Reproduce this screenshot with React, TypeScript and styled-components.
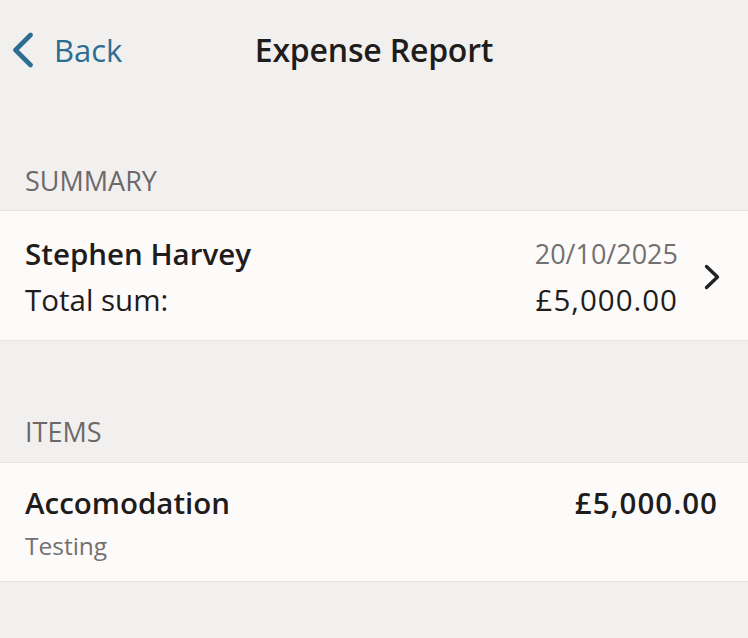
import React from "react";
import styled, { createGlobalStyle } from "styled-components";

const Global = createGlobalStyle`
  html, body { margin: 0; padding: 0; background: #f2f0ef; }
  body { font-family: "Open Sans", "Noto Sans", sans-serif; color: #1f1c1c; }
`;

const Page = styled.div`
  min-height: 638px;
  background: #f2f0ef;
`;

const Header = styled.header`
  height: 100px;
  display: grid;
  grid-template-columns: 1fr auto 1fr;
  align-items: center;
`;

const BackButton = styled.button`
  display: flex;
  align-items: center;
  gap: 20px;
  padding: 0 0 0 12px;
  border: none;
  background: none;
  color: #2e6d92;
  font-family: inherit;
  font-size: 31px;
  line-height: 40px;
  justify-self: start;
  cursor: pointer;
`;

const Title = styled.h1`
  margin: 0;
  font-size: 32px;
  font-weight: 600;
  line-height: 40px;
  color: #1f1c1c;
  letter-spacing: -0.2px;
`;

const SectionLabel = styled.div<{ $top: number; $bottom: number }>`
  padding: ${(p) => p.$top}px 25px ${(p) => p.$bottom}px;
  font-size: 27px;
  line-height: 30px;
  color: #6d6969;
  text-transform: uppercase;
`;

const Card = styled.div<{ $pt: number; $pb: number; $pr: number }>`
  background: #fdfafa;
  border-top: 1px solid #e6e3e2;
  border-bottom: 1px solid #e6e3e2;
  padding: ${(p) => p.$pt}px ${(p) => p.$pr}px ${(p) => p.$pb}px 25px;
  display: flex;
  align-items: center;
  gap: 26px;
`;

const CardBody = styled.div`
  flex: 1;
  display: flex;
  flex-direction: column;
  gap: 10px;
`;

const Line = styled.div`
  display: flex;
  justify-content: space-between;
  align-items: center;
`;

const Text = styled.span<{ $weight?: number; $size?: number; $color?: string; $lh?: number; $ls?: number }>`
  font-size: ${(p) => p.$size ?? 29.5}px;
  font-weight: ${(p) => p.$weight ?? 400};
  line-height: ${(p) => p.$lh ?? 36}px;
  letter-spacing: ${(p) => p.$ls ?? 0}px;
  color: ${(p) => p.$color ?? "#1f1c1c"};
`;

const Chevron = () => (
  <svg width="16" height="26" viewBox="0 0 16 26" fill="none">
    <polyline points="2.5,2.5 13.5,13 2.5,23.5" stroke="#222" strokeWidth="3.4" strokeLinecap="round" strokeLinejoin="round" />
  </svg>
);

const BackChevron = () => (
  <svg width="22" height="36" viewBox="0 0 22 36" fill="none">
    <polyline points="18.5,3 3.5,18 18.5,33" stroke="#2e6d92" strokeWidth="4.6" strokeLinecap="round" strokeLinejoin="round" />
  </svg>
);

export default function App() {
  return (
    <Page>
      <Global />
      <Header>
        <BackButton>
          <BackChevron />
          Back
        </BackButton>
        <Title>Expense Report</Title>
        <div />
      </Header>

      <SectionLabel $top={66} $bottom={14}>Summary</SectionLabel>
      <Card $pt={25} $pb={22} $pr={28}>
        <CardBody>
          <Line>
            <Text $weight={600}>Stephen Harvey</Text>
            <Text $size={27} $color="#737070">20/10/2025</Text>
          </Line>
          <Line>
            <Text>Total sum:</Text>
            <Text $ls={1}>£5,000.00</Text>
          </Line>
        </CardBody>
        <Chevron />
      </Card>

      <SectionLabel $top={76} $bottom={15}>Items</SectionLabel>
      <Card $pt={22} $pb={20} $pr={30}>
        <CardBody>
          <Line>
            <Text $weight={600}>Accomodation</Text>
            <Text $weight={600} $ls={1}>£5,000.00</Text>
          </Line>
          <Line>
            <Text $size={24.5} $lh={30} $color="#737070">Testing</Text>
          </Line>
        </CardBody>
      </Card>
    </Page>
  );
}
